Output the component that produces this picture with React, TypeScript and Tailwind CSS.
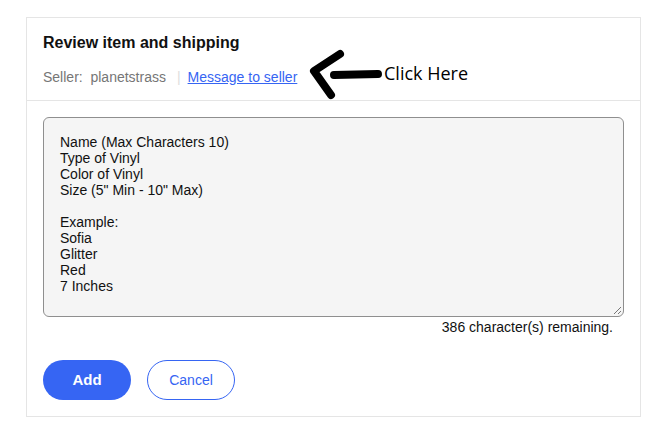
import React from 'react';

const lines = [
  'Name (Max Characters 10)',
  'Type of Vinyl',
  'Color of Vinyl',
  'Size (5" Min - 10" Max)',
  '',
  'Example:',
  'Sofia',
  'Glitter',
  'Red',
  '7 Inches',
];

const App: React.FC = () => {
  return (
    <div className="w-[651px] h-[425px] bg-white overflow-hidden pt-[17px] pl-[26px] font-['Liberation_Sans',Arial,sans-serif]">
      <div className="w-[615px] border-x border-t border-[#e5e5e5]">
        {/* Header */}
        <div className="relative h-[83px] border-b border-[#e5e5e5] pl-4 pt-[15px]">
          <h2 className="text-[16px] leading-[20px] font-bold text-[#111]">Review item and shipping</h2>
          <div className="mt-[15px] flex items-center text-[14px] leading-[18px]">
            <span className="text-[#767676]">Seller:&nbsp; planetstrass</span>
            <span className="ml-[11px] mr-[7px] text-[#ddd]">|</span>
            <a href="#" className="text-[#3665f3] underline">Message to seller</a>
          </div>
          {/* annotation */}
          <div className="absolute left-[282px] top-[31px] flex items-center">
            <svg width="76" height="52" viewBox="0 0 76 52">
              <g stroke="#000" strokeWidth="8" strokeLinecap="round" strokeLinejoin="round" fill="none">
                <path d="M31 5 L5 22 L22 46" />
                <path d="M25 26 L69 25" />
              </g>
            </svg>
            <span className="-ml-[1px] text-[18px] text-black font-['Open_Sans',sans-serif] -mt-[4px]">Click Here</span>
          </div>
        </div>
        {/* Body */}
        <div className="px-4 pt-4 pb-4 border-b border-[#e5e5e5]">
          <div className="relative h-[200px] w-[581px] rounded-[6px] border border-[#8f8f8f] bg-[#f5f5f5] pl-4 pt-4 text-[14px] leading-[16px] text-[#111]">
            {lines.map((l, i) => (
              <div key={i} className="h-4">{l}</div>
            ))}
            <svg className="absolute right-[1px] bottom-[1px]" width="9" height="9" viewBox="0 0 9 9">
              <path d="M8 1 L1 8 M8 5 L5 8" stroke="#777" strokeWidth="1" />
            </svg>
          </div>
          <div className="w-[581px] pr-[11px] text-right text-[14px] leading-[20px] text-[#111]">
            386 character(s) remaining.
          </div>
          <div className="mt-[23px] flex gap-4">
            <button className="w-[88px] h-[40px] rounded-full bg-[#3665f3] text-white text-[15px] font-bold">Add</button>
            <button className="w-[88px] h-[40px] rounded-full border border-[#3665f3] text-[#3665f3] text-[14px]">Cancel</button>
          </div>
        </div>
      </div>
    </div>
  );
};

export default App;
